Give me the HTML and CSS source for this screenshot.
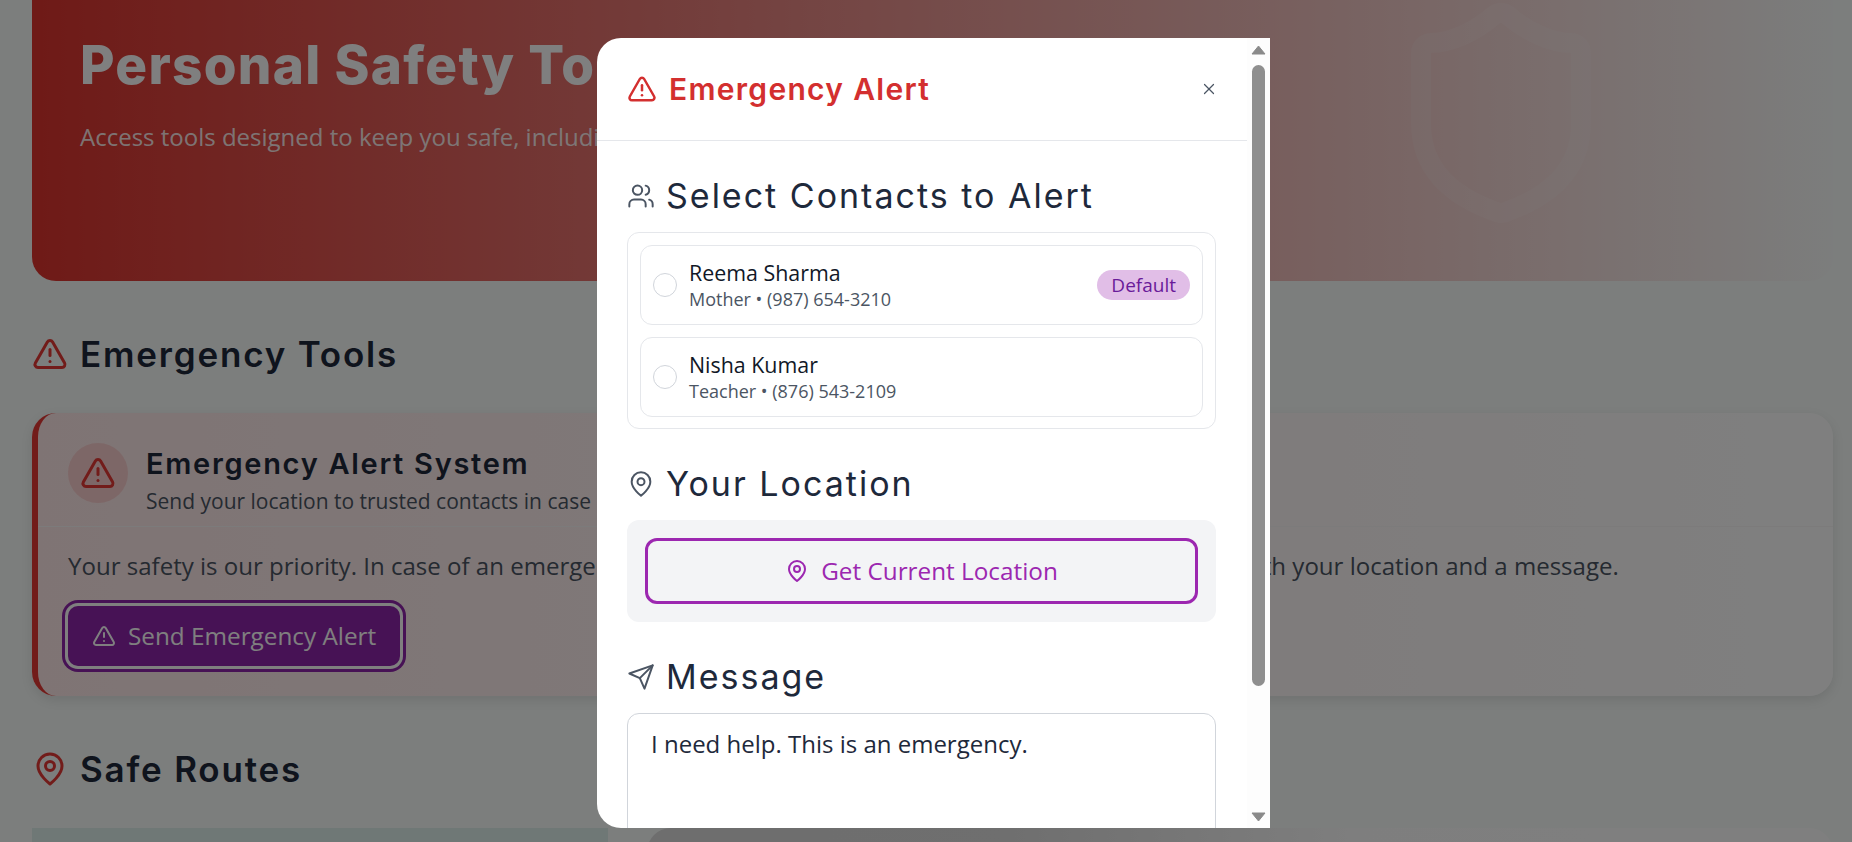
FILE: index.html
```html
<!DOCTYPE html>
<html lang="en">
<head>
<meta charset="utf-8">
<title>Personal Safety Tools</title>
<link rel="stylesheet" href="styles.css">
</head>
<body>
<svg class="sprite" aria-hidden="true">
  <symbol id="i-alert" viewBox="0 0 24 24"><path d="m21.73 18-8-14a2 2 0 0 0-3.48 0l-8 14A2 2 0 0 0 4 21h16a2 2 0 0 0 1.73-3"/><path d="M12 9v4"/><path d="M12 17h.01"/></symbol>
  <symbol id="i-pin" viewBox="0 0 24 24"><path d="M20 10c0 6-8 12-8 12s-8-6-8-12a8 8 0 0 1 16 0Z"/><circle cx="12" cy="10" r="3"/></symbol>
  <symbol id="i-users" viewBox="0 0 24 24"><path d="M16 21v-2a4 4 0 0 0-4-4H6a4 4 0 0 0-4 4v2"/><circle cx="9" cy="7" r="4"/><path d="M22 21v-2a4 4 0 0 0-3-3.87"/><path d="M16 3.13a4 4 0 0 1 0 7.75"/></symbol>
  <symbol id="i-send" viewBox="0 0 24 24"><path d="m22 2-7 20-4-9-9-4Z"/><path d="M22 2 11 13"/></symbol>
  <symbol id="i-x" viewBox="0 0 24 24"><path d="M18 6 6 18"/><path d="m6 6 12 12"/></symbol>
  <symbol id="i-shield" viewBox="0 0 24 24"><path d="M20 13c0 5-3.5 7.5-7.66 8.95a1 1 0 0 1-.67-.01C7.5 20.5 4 18 4 13V6a1 1 0 0 1 1-1c2 0 4.5-1.2 6.24-2.72a1.17 1.17 0 0 1 1.52 0C14.51 3.81 17 5 19 5a1 1 0 0 1 1 1z"/></symbol>
</svg>

<main class="page">
  <section class="hero">
    <svg class="icon hero-shield"><use href="#i-shield"/></svg>
    <h1 class="hero-title">Personal Safety Tools</h1>
    <p class="hero-sub">Access tools designed to keep you safe, including emergency alerts and safe routes.</p>
  </section>

  <h2 class="page-heading"><svg class="icon icon-36 red"><use href="#i-alert"/></svg>Emergency Tools</h2>

  <article class="card">
    <header class="card-head">
      <div class="card-badge"><svg class="icon icon-36 red"><use href="#i-alert"/></svg></div>
      <div class="card-titles">
        <h3 class="card-title">Emergency Alert System</h3>
        <p class="card-sub">Send your location to trusted contacts in case of an emergency</p>
      </div>
    </header>
    <div class="card-body">
      <p class="card-text">Your safety is our priority. In case of an emergency, use this button to quickly alert your trusted contacts with your location and a message.</p>
      <button class="alert-btn" type="button"><svg class="icon icon-24"><use href="#i-alert"/></svg>Send Emergency Alert</button>
    </div>
  </article>

  <h2 class="page-heading routes"><svg class="icon icon-36 red"><use href="#i-pin"/></svg>Safe Routes</h2>

  <div class="routes-row">
    <div class="map-panel"></div>
    <div class="route-panel"></div>
  </div>
</main>

<div class="overlay">
  <div class="modal">
    <div class="modal-main">
      <header class="modal-head">
        <h2 class="modal-title"><svg class="icon icon-30"><use href="#i-alert"/></svg>Emergency Alert</h2>
        <svg class="icon modal-close"><use href="#i-x"/></svg>
      </header>
      <div class="modal-body">
        <h3 class="field-heading"><svg class="icon icon-28"><use href="#i-users"/></svg>Select Contacts to Alert</h3>
        <div class="contacts">
          <div class="contact">
            <span class="radio"></span>
            <div class="contact-info">
              <div class="contact-name">Reema Sharma</div>
              <div class="contact-meta">Mother • (987) 654-3210</div>
            </div>
            <span class="badge">Default</span>
          </div>
          <div class="contact">
            <span class="radio"></span>
            <div class="contact-info">
              <div class="contact-name">Nisha Kumar</div>
              <div class="contact-meta">Teacher • (876) 543-2109</div>
            </div>
          </div>
        </div>

        <h3 class="field-heading"><svg class="icon icon-28"><use href="#i-pin"/></svg>Your Location</h3>
        <div class="location-box">
          <button class="location-btn" type="button"><svg class="icon icon-24"><use href="#i-pin"/></svg>Get Current Location</button>
        </div>

        <h3 class="field-heading"><svg class="icon icon-28"><use href="#i-send"/></svg>Message</h3>
        <textarea class="message" readonly>I need help. This is an emergency.</textarea>
      </div>
    </div>
    <div class="scrollbar">
      <svg class="arrow arrow-up" viewBox="0 0 15 10"><path d="M7.5 1 14 9H1Z"/></svg>
      <div class="thumb"></div>
      <svg class="arrow arrow-down" viewBox="0 0 15 10"><path d="M1 1h13L7.5 9Z"/></svg>
    </div>
  </div>
</div>
</body>
</html>
```

FILE: styles.css
```css
* { box-sizing: border-box; }
html, body { margin: 0; height: 100%; }
body {
  overflow: hidden;
  background: #f8fcfa;
  font-family: "Open Sans", "Noto Sans", sans-serif;
  color: #1f2937;
}
h1, h2, h3, p { margin: 0; }
.sprite { display: none; }

.icon {
  fill: none;
  stroke: currentColor;
  stroke-width: 2;
  stroke-linecap: round;
  stroke-linejoin: round;
  flex: none;
}
.icon-24 { width: 24px; height: 24px; }
.icon-28 { width: 28px; height: 28px; stroke-width: 1.7; color: #4b5563; }
.icon-30 { width: 30px; height: 30px; }
.icon-36 { width: 36px; height: 36px; }
.red { color: #e53935; }

/* page behind the dialog */
.page { padding: 0 19px 0 32px; height: 842px; overflow: hidden; }

.hero {
  position: relative;
  height: 281px;
  padding: 38px 48px 0;
  border-radius: 0 0 24px 24px;
  background: linear-gradient(90deg, #de342e, #f8fbfa);
  color: #fff;
  overflow: hidden;
}
.hero-shield {
  position: absolute;
  left: 1349px;
  top: -7px;
  width: 240px;
  height: 240px;
  color: rgba(255, 255, 255, .12);
}
.hero-title {
  font-family: Inter, "Open Sans", sans-serif;
  font-size: 53px;
  line-height: 54px;
  font-weight: 800;
  letter-spacing: 1.3px;
  white-space: nowrap;
}
.hero-sub {
  margin-top: 30px;
  font-size: 24px;
  line-height: 30px;
  color: rgba(255, 255, 255, .9);
  white-space: nowrap;
}

.page-heading {
  display: flex;
  align-items: center;
  gap: 12px;
  margin: 53px 0 39px;
  font-family: Inter, "Open Sans", sans-serif;
  font-size: 35px;
  line-height: 40px;
  font-weight: 600;
  letter-spacing: 1.8px;
  color: #1e293b;
}

.card {
  height: 283px;
  border-left: 6px solid #e53935;
  border-radius: 24px;
  background: linear-gradient(90deg, #ffe9e9, #fff);
  box-shadow: 0 4px 12px rgba(0, 0, 0, .1);
}
.card-head {
  display: flex;
  gap: 18px;
  height: 114px;
  padding: 30px 30px 0;
  border-bottom: 1px solid #f9f6f6;
}
.card-badge {
  display: flex;
  align-items: center;
  justify-content: center;
  width: 60px;
  height: 60px;
  border-radius: 50%;
  background: rgba(229, 57, 53, .15);
}
.card-titles { padding-top: 3px; }
.card-title {
  font-family: Inter, "Open Sans", sans-serif;
  font-size: 29px;
  line-height: 36px;
  font-weight: 600;
  letter-spacing: 1.7px;
  color: #1e293b;
}
.card-sub {
  margin-top: 5px;
  font-size: 21px;
  line-height: 28px;
  color: #4b5563;
  white-space: nowrap;
}
.card-body { padding: 25px 30px 0; }
.card-text { font-size: 24.05px; line-height: 28px; color: #4b5563; white-space: nowrap; }
.alert-btn {
  display: inline-flex;
  align-items: center;
  gap: 12px;
  width: 332px;
  height: 60px;
  margin: 26px 0 0;
  padding: 0 24px;
  border: 0;
  border-radius: 10px;
  background: #8e24aa;
  box-shadow: 0 0 0 3px #fff, 0 0 0 6px #8e24aa;
  color: #fff;
  font: 500 24.3px/28px "Open Sans", sans-serif;
  white-space: nowrap;
}

.routes-row { display: flex; gap: 39px; height: 60px; }
.map-panel { width: 576px; background: #def0ec; }
.route-panel {
  flex: 1;
  border-radius: 24px 24px 0 0;
  background: linear-gradient(90deg, #dcdcdc 0, #dedede 30%, #fdfdfd 60%, #fff 100%);
}

/* dialog */
.overlay {
  position: fixed;
  inset: 0;
  display: flex;
  padding: 38px 582px 14px 597px;
  background: rgba(0, 0, 0, .5);
}
.modal {
  display: flex;
  flex: 1;
  min-width: 0;
  border-radius: 24px 0 0 24px;
  background: #fff;
  overflow: hidden;
}
.modal-main { flex: 1; min-width: 0; overflow: hidden; }
.modal-head {
  display: flex;
  align-items: center;
  justify-content: space-between;
  height: 103px;
  padding: 0 29px 0 30px;
  border-bottom: 1px solid #e5e7eb;
}
.modal-title {
  display: flex;
  align-items: center;
  gap: 12px;
  font-family: Inter, "Open Sans", sans-serif;
  font-size: 30px;
  line-height: 36px;
  font-weight: 600;
  letter-spacing: 1.3px;
  color: #d32f2f;
}
.modal-close { width: 18px; height: 18px; color: #4b5563; stroke-width: 1.6; }
.modal-body { padding: 35px 31px 0 30px; }
.field-heading {
  display: flex;
  align-items: center;
  gap: 11px;
  margin: 0 0 16px;
  font-family: Inter, "Open Sans", sans-serif;
  font-size: 34px;
  line-height: 40px;
  font-weight: 400;
  letter-spacing: 2px;
  color: #1e293b;
}
.contacts {
  display: flex;
  flex-direction: column;
  gap: 12px;
  height: 197px;
  margin-bottom: 35px;
  padding: 12px;
  border: 1px solid #e5e7eb;
  border-radius: 12px;
}
.contact {
  display: flex;
  align-items: center;
  gap: 12px;
  height: 80px;
  flex: none;
  padding: 0 12px;
  border: 1px solid #e5e7eb;
  border-radius: 12px;
}
.radio {
  width: 24px;
  height: 24px;
  border: 1px solid #d1d5db;
  border-radius: 50%;
  flex: none;
}
.contact-info { flex: 1; min-width: 0; }
.contact-name { font-size: 21.4px; line-height: 28px; font-weight: 500; color: #111827; }
.contact-meta { font-size: 18px; line-height: 24px; color: #4b5563; }
.badge {
  padding: 0 14px;
  border-radius: 15px;
  background: #e1bee7;
  color: #6a1b9a;
  font-size: 19px;
  line-height: 30px;
}
.location-box {
  margin-bottom: 35px;
  padding: 18px;
  border-radius: 12px;
  background: #f3f4f6;
}
.location-btn {
  display: flex;
  align-items: center;
  justify-content: center;
  gap: 12px;
  width: 100%;
  height: 66px;
  border: 3px solid #9c27b0;
  border-radius: 12px;
  background: transparent;
  color: #9c27b0;
  font: 500 24.3px/28px "Open Sans", sans-serif;
}
.message {
  display: block;
  width: 100%;
  height: 160px;
  padding: 15px 23px;
  border: 1px solid #d1d5db;
  border-radius: 12px;
  color: #1e293b;
  font: 400 24px/30px "Open Sans", sans-serif;
  resize: none;
  outline: none;
  overflow: hidden;
}

.scrollbar {
  display: flex;
  flex-direction: column;
  align-items: center;
  flex: none;
  width: 23px;
  padding: 7px 4px 6px;
  background: #fdfdfd;
}
.arrow { width: 15px; height: 10px; fill: #8a8a8a; stroke: #8a8a8a; stroke-width: 1; stroke-linejoin: round; flex: none; }
.thumb {
  width: 13px;
  height: 621px;
  margin: 10px 0 auto;
  border-radius: 7px;
  background: #8f8f8f;
}
```
